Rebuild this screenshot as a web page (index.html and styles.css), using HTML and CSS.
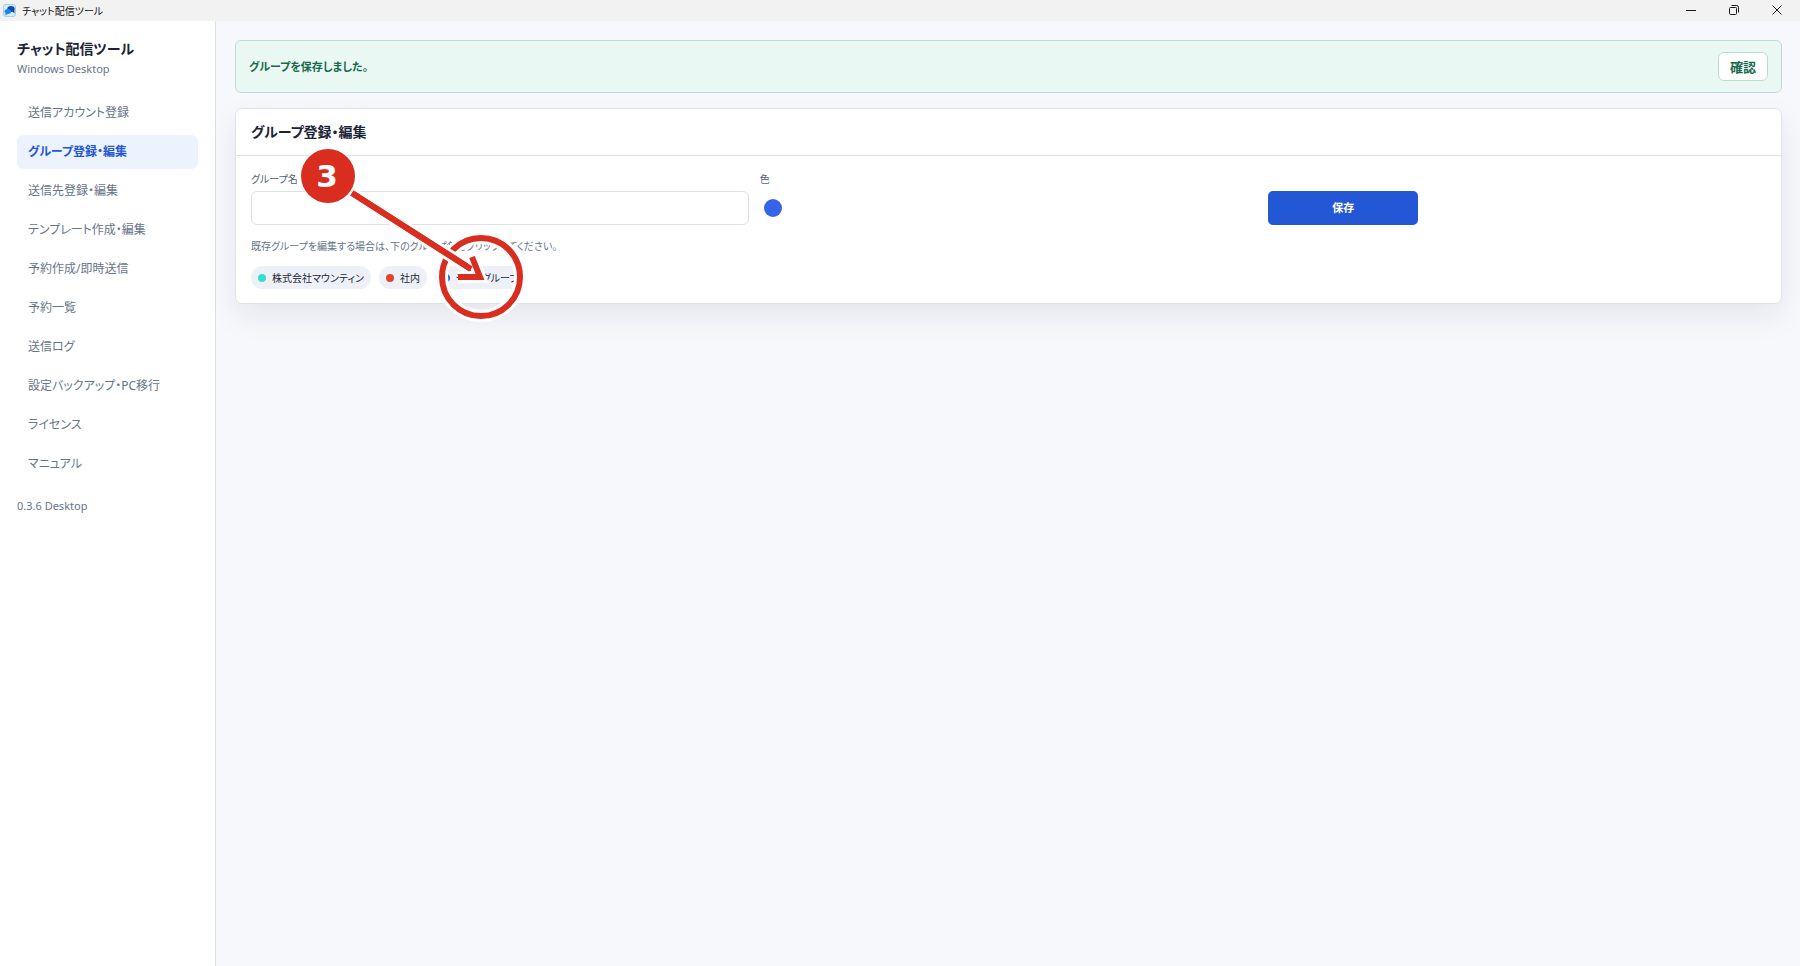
FILE: index.html
```html
<!DOCTYPE html>
<html lang="ja">
<head>
  <meta charset="UTF-8">
  <meta name="viewport" content="width=device-width, initial-scale=1.0">
  <title>チャット配信ツール</title>
  <link rel="stylesheet" href="styles.css">
</head>
<body>
  <header class="titlebar">
    <svg class="app-icon" viewBox="0 0 14 14" aria-hidden="true">
      <rect x="0.5" y="0.5" width="13" height="13" rx="2.5" fill="#d5ecfb" stroke="#9ccbed"/>
      <ellipse cx="8.6" cy="5.4" rx="4" ry="3.3" fill="#0d4fa8"/>
      <path d="M10 8l2.6 2.2-.6-4z" fill="#0b3f86"/>
      <ellipse cx="5.2" cy="8.2" rx="3.5" ry="2.7" fill="#1c86e8"/>
      <path d="M3 10l-.6 2.4 3-1.6z" fill="#1c86e8"/>
    </svg>
    <span class="titlebar-text">チャット配信ツール</span>
    <div class="window-controls">
      <button type="button" aria-label="最小化">
        <svg viewBox="0 0 12 12"><path d="M1 6.5h10"/></svg>
      </button>
      <button type="button" aria-label="元に戻す">
        <svg viewBox="0 0 12 12"><rect x="1.5" y="3.5" width="7" height="7" rx="1"/><path d="M3.5 1.5h5a2 2 0 0 1 2 2v5"/></svg>
      </button>
      <button type="button" aria-label="閉じる">
        <svg viewBox="0 0 12 12"><path d="M1.5 1.5l9 9M10.5 1.5l-9 9"/></svg>
      </button>
    </div>
  </header>

  <div class="app">
    <aside class="sidebar">
      <h1>チャット配信ツール</h1>
      <p class="subtitle">Windows Desktop</p>
      <nav class="menu">
        <a href="#account">送信アカウント登録</a>
        <a href="#group" class="active">グループ登録・編集</a>
        <a href="#recipient">送信先登録・編集</a>
        <a href="#template">テンプレート作成・編集</a>
        <a href="#schedule">予約作成/即時送信</a>
        <a href="#list">予約一覧</a>
        <a href="#log">送信ログ</a>
        <a href="#backup">設定バックアップ・PC移行</a>
        <a href="#license">ライセンス</a>
        <a href="#manual">マニュアル</a>
      </nav>
      <p class="version">0.3.6 Desktop</p>
    </aside>

    <main class="content">
      <div class="notice" role="status">
        <span>グループを保存しました。</span>
        <button type="button" class="notice-button">確認</button>
      </div>

      <section class="card">
        <h2>グループ登録・編集</h2>
        <div class="card-body">
          <form class="group-form">
            <div class="field">
              <label for="group-name">グループ名</label>
              <input type="text" id="group-name" class="text-input">
            </div>
            <div class="field">
              <label for="group-color">色</label>
              <input type="color" id="group-color" class="color-input" value="#3563e9">
            </div>
            <button type="button" class="save-button">保存</button>
          </form>
          <p class="hint">既存グループを編集する場合は、下のグループ名をクリックしてください。</p>
          <div class="chips">
            <button type="button" class="chip"><span class="dot teal"></span>株式会社マウンティン</button>
            <button type="button" class="chip"><span class="dot red"></span>社内</button>
            <button type="button" class="chip"><span class="dot blue"></span>テストグループ</button>
          </div>
        </div>
      </section>
    </main>
  </div>

  <!-- step marker, drawn over the page -->
  <svg class="callout" width="240" height="180" viewBox="290 145 240 180">
    <circle cx="481" cy="277" r="39" class="halo"/>
    <circle cx="481" cy="277" r="39" class="mark"/>
    <path d="M352 193L474 271" class="halo"/>
    <path d="M352 193L474 271" class="mark"/>
    <path d="M458 277H480L472 257" class="halo"/>
    <path d="M352 193L471 269" class="mark"/>
    <path d="M458 277H480L472 257" class="mark"/>
    <circle cx="328" cy="176" r="28" class="badge-ring"/>
    <circle cx="328" cy="176" r="27" class="badge"/>
    <text x="327" y="187" class="badge-text">3</text>
  </svg>
</body>
</html>
```

FILE: styles.css
```css
* {
  box-sizing: border-box;
  margin: 0;
  padding: 0;
}

body {
  min-height: 100vh;
  display: flex;
  flex-direction: column;
  font-family: "Noto Sans", "Noto Sans CJK JP", sans-serif;
  font-feature-settings: "palt";
  font-size: 12px;
  line-height: 18px;
  color: #1b2436;
  background: #f6f8fc;
}

button,
input {
  font: inherit;
  font-feature-settings: inherit;
  color: inherit;
}

button {
  border: none;
  background: none;
  cursor: pointer;
}

.titlebar {
  display: flex;
  align-items: center;
  height: 21px;
  padding: 0 2px 0 3px;
  background: #f2f2f2;
  font-size: 10px;
  color: #111;
}

.app-icon {
  width: 13px;
  height: 13px;
  margin-right: 6px;
}

.window-controls {
  display: flex;
  align-self: flex-start;
  margin-left: auto;
}

.window-controls button {
  display: flex;
  align-items: center;
  justify-content: center;
  width: 43px;
  height: 19px;
}

.window-controls svg {
  width: 12px;
  height: 12px;
  fill: none;
  stroke: #1a1a1a;
}

.app {
  flex: 1;
  display: flex;
}

.sidebar {
  width: 216px;
  flex-shrink: 0;
  padding: 17px;
  background: #fff;
  border-right: 1px solid #dae0ea;
}

.sidebar h1 {
  font-size: 14px;
  line-height: 22px;
}

.subtitle,
.version {
  font-size: 11px;
  color: #67758a;
}

.menu {
  display: flex;
  flex-direction: column;
  gap: 5px;
  margin: 18px 0 16px;
}

.menu a {
  padding: 8px 11px;
  border-radius: 6px;
  color: #67758a;
  text-decoration: none;
}

.menu a.active {
  background: #edf2ff;
  color: #2457d6;
  font-weight: 600;
}

.content {
  flex: 1;
  padding: 19px 18px 19px 19px;
}

.notice {
  display: flex;
  align-items: center;
  justify-content: space-between;
  padding: 11px 13px;
  border: 1px solid #bcdcd2;
  border-radius: 6px;
  background: #eaf8f4;
  color: #17694d;
  font-size: 11px;
  font-weight: 600;
}

.notice-button {
  height: 29px;
  padding: 0 11px;
  border: 1px solid #bcdcd2;
  border-radius: 6px;
  background: #fff;
  font-size: 13px;
}

.card {
  margin-top: 15px;
  border: 1px solid #dce2ec;
  border-radius: 7px;
  background: #fff;
  box-shadow: 0 12px 30px rgba(20, 30, 60, 0.08);
}

.card h2 {
  padding: 13px 15px;
  border-bottom: 1px solid #dce2ec;
  font-size: 14px;
  line-height: 20px;
}

.card-body {
  padding: 15px 15px 14px;
}

.group-form {
  display: grid;
  grid-template-columns: repeat(3, 1fr);
  gap: 11px;
  align-items: end;
}

.field {
  display: flex;
  flex-direction: column;
  gap: 4px;
}

.field label {
  font-size: 10px;
  line-height: 16px;
  color: #536176;
}

.text-input {
  height: 34px;
  padding: 0 10px;
  border: 1px solid #dce2ec;
  border-radius: 6px;
  background: #fff;
}

.color-input {
  width: 26px;
  height: 34px;
  padding: 8px 4px;
  border: none;
  background: none;
  appearance: none;
}

.color-input::-webkit-color-swatch-wrapper {
  padding: 0;
}

.color-input::-webkit-color-swatch {
  border: none;
  border-radius: 50%;
}

.save-button {
  width: 150px;
  height: 34px;
  border-radius: 5px;
  background: #2457d6;
  color: #fff;
  font-size: 11px;
  font-weight: 700;
}

.hint {
  margin-top: 12px;
  font-size: 10px;
  color: #67758a;
}

.chips {
  display: flex;
  gap: 8px;
  margin-top: 11px;
}

.chip {
  display: flex;
  align-items: center;
  gap: 6px;
  height: 23px;
  padding: 0 7px;
  border-radius: 12px;
  background: #edf1f7;
  font-size: 10px;
}

.dot {
  width: 8px;
  height: 8px;
  border-radius: 50%;
}

.teal {
  background: #35e0cb;
}

.red {
  background: #e5412f;
}

.blue {
  background: #3563e9;
}

.callout {
  position: absolute;
  left: 290px;
  top: 145px;
  pointer-events: none;
}

.halo {
  fill: none;
  stroke: #fff;
  stroke-width: 12px;
}

.mark {
  fill: none;
  stroke: #d92d20;
  stroke-width: 6px;
}

.badge {
  fill: #d92d20;
}

.badge-ring {
  fill: #fff;
}

.badge-text {
  fill: #fff;
  font-family: "DejaVu Sans", sans-serif;
  font-size: 31px;
  font-weight: 700;
  text-anchor: middle;
}
```
